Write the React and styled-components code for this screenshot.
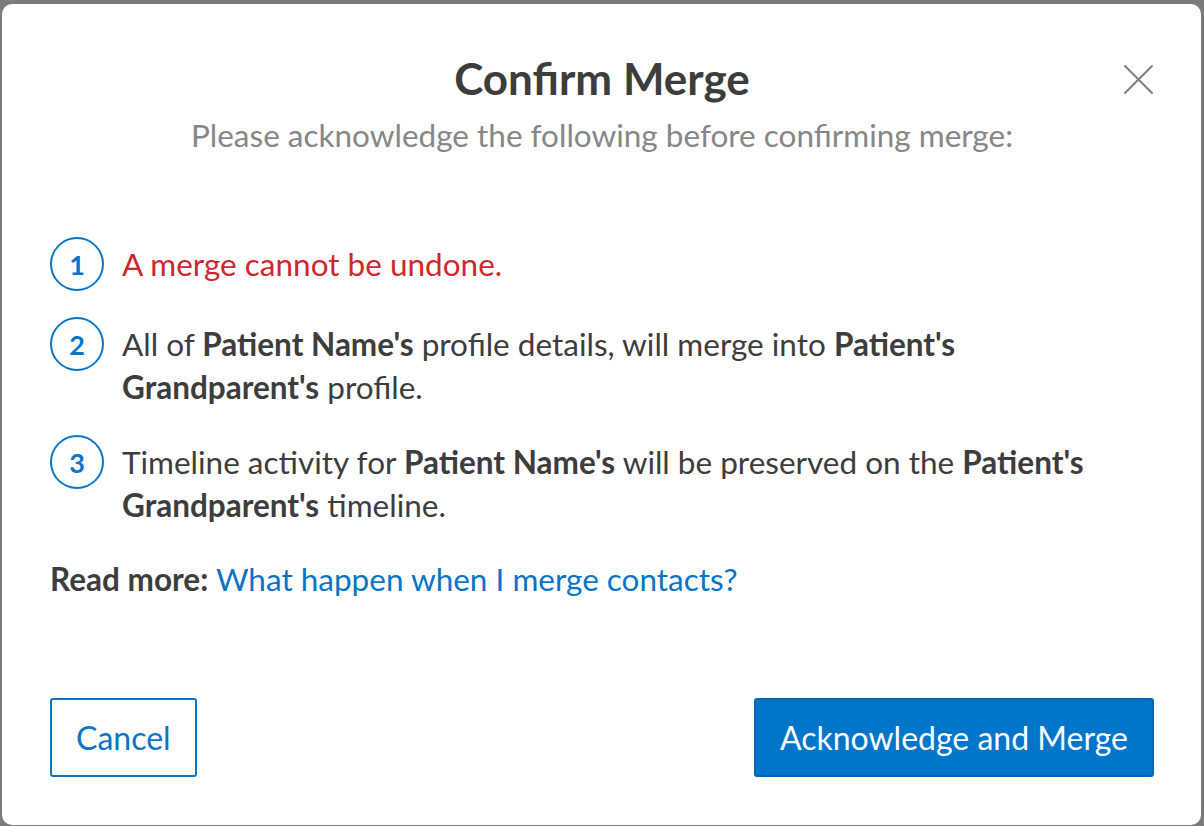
import React from "react";
import styled, { createGlobalStyle } from "styled-components";

const GlobalStyle = createGlobalStyle`
  html, body {
    margin: 0;
    padding: 0;
    background: #7b7b7b;
  }
  body {
    font-family: Lato, "Open Sans", sans-serif;
  }
`;

const Page = styled.div`
  width: 1204px;
  height: 826px;
  box-sizing: border-box;
  padding: 4px 3px 1px 2px;
  overflow: hidden;
  position: relative;
`;

const Modal = styled.div`
  position: relative;
  height: 100%;
  box-sizing: border-box;
  background: #fff;
  border-radius: 10px;
  padding: 48px 47px 0 48px;
  display: flex;
  flex-direction: column;
  color: #3d3d3d;
`;

const Header = styled.div`
  text-align: center;
`;

const Title = styled.h1`
  margin: 0;
  font-size: 44px;
  line-height: 52px;
  font-weight: 700;
  color: #3d3d3d;
`;

const Subtitle = styled.p`
  margin: 12px 0 0;
  font-size: 31.5px;
  line-height: 38px;
  color: #878787;
`;

const CloseButton = styled.button`
  position: absolute;
  top: 60px;
  right: 47px;
  width: 31px;
  height: 31px;
  padding: 0;
  border: 0;
  background: none;
  cursor: pointer;
`;

const Steps = styled.ol`
  list-style: none;
  margin: 83px 0 0;
  padding: 0;
  display: flex;
  flex-direction: column;
  gap: 26px;
`;

const Step = styled.li`
  display: flex;
  align-items: flex-start;
  gap: 18px;
`;

const StepNumber = styled.span`
  flex: 0 0 auto;
  width: 54px;
  height: 54px;
  box-sizing: border-box;
  border: 2px solid #0a76cb;
  border-radius: 50%;
  display: flex;
  align-items: center;
  justify-content: center;
  color: #0a74c6;
  font-size: 27px;
  font-weight: 700;
`;

const StepText = styled.div`
  padding-top: 6px;
  font-size: 31.5px;
  line-height: 43px;
  color: ${(p) => (p.$danger ? "#d1262e" : "#3d3d3d")};

  b {
    font-weight: 700;
  }
`;

const ReadMore = styled.p`
  margin: 31px 0 0;
  font-size: 31.5px;
  line-height: 43px;

  b {
    font-weight: 700;
  }
`;

const Link = styled.a`
  color: #0a74c6;
  text-decoration: none;
`;

const Footer = styled.div`
  margin-top: auto;
  margin-bottom: 48px;
  display: flex;
  justify-content: space-between;
`;

const Button = styled.button`
  height: 79px;
  box-sizing: border-box;
  padding: 0 24px;
  border-radius: 3px;
  font-family: Lato, "Open Sans", sans-serif;
  font-size: 32px;
  cursor: pointer;
  border: 2px solid ${(p) => (p.$primary ? "#0068b6" : "#0a76cb")};
  background: ${(p) => (p.$primary ? "#0075c9" : "#fff")};
  color: ${(p) => (p.$primary ? "#fff" : "#0a74c6")};
`;

const CloseIcon = () => (
  <svg width="31" height="31" viewBox="0 0 31 31">
    <path
      d="M2 2 L29 29 M29 2 L2 29"
      stroke="#808080"
      strokeWidth="2"
      strokeLinecap="round"
      fill="none"
    />
  </svg>
);

export default function App() {
  return (
    <>
      <GlobalStyle />
      <Page>
        <Modal>
          <CloseButton aria-label="Close">
            <CloseIcon />
          </CloseButton>
          <Header>
            <Title>Confirm Merge</Title>
            <Subtitle>Please acknowledge the following before confirming merge:</Subtitle>
          </Header>
          <Steps>
            <Step>
              <StepNumber>1</StepNumber>
              <StepText $danger>A merge cannot be undone.</StepText>
            </Step>
            <Step>
              <StepNumber>2</StepNumber>
              <StepText>
                All of <b>Patient Name's</b> profile details, will merge into <b>Patient's</b>
                <br />
                <b>Grandparent's</b> profile.
              </StepText>
            </Step>
            <Step>
              <StepNumber>3</StepNumber>
              <StepText>
                Timeline activity for <b>Patient Name's</b> will be preserved on the <b>Patient's</b>
                <br />
                <b>Grandparent's</b> timeline.
              </StepText>
            </Step>
          </Steps>
          <ReadMore>
            <b>Read more:</b> <Link href="#">What happen when I merge contacts?</Link>
          </ReadMore>
          <Footer>
            <Button>Cancel</Button>
            <Button $primary>Acknowledge and Merge</Button>
          </Footer>
        </Modal>
      </Page>
    </>
  );
}
